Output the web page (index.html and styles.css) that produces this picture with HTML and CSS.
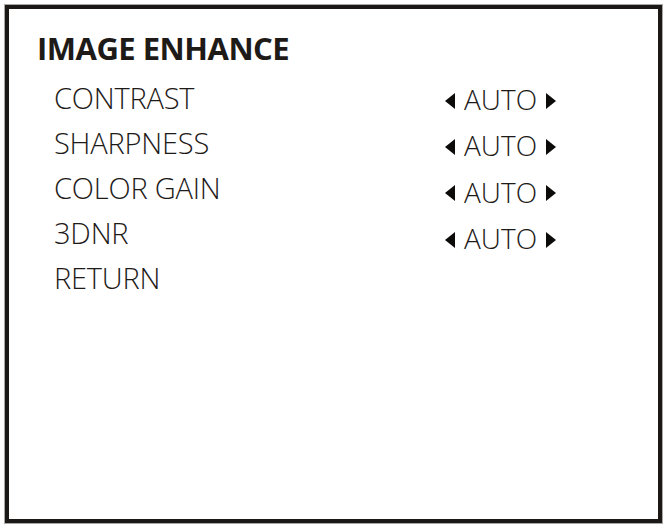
FILE: index.html
```html
<!DOCTYPE html>
<html lang="en">
<head>
    <meta charset="UTF-8">
    <title>Image Enhance</title>
    <link rel="stylesheet" href="styles.css">
</head>
<body>
    <div class="osd">
        <header>IMAGE ENHANCE</header>
        <div class="menu">
            <ul class="labels">
                <li>CONTRAST</li>
                <li>SHARPNESS</li>
                <li>COLOR GAIN</li>
                <li>3DNR</li>
                <li>RETURN</li>
            </ul>
            <ul class="values">
                <li><span class="arrow left"></span>AUTO<span class="arrow right"></span></li>
                <li><span class="arrow left"></span>AUTO<span class="arrow right"></span></li>
                <li><span class="arrow left"></span>AUTO<span class="arrow right"></span></li>
                <li><span class="arrow left"></span>AUTO<span class="arrow right"></span></li>
            </ul>
        </div>
    </div>
</body>
</html>
```

FILE: styles.css
```css
* {
    margin: 0;
    padding: 0;
    box-sizing: border-box;
}
body {
    background: white;
    font-family: 'Open Sans', sans-serif;
    color: #1e1a18;
    padding: 5px 6px 6px 5px;
}
.osd {
    height: 518px;
    border: 4px solid #1b1816;
    outline: 1px solid #a8a8a8;
    padding: 20px 0 0 28px;
}
header {
    font-size: 31px;
    font-weight: 700;
    line-height: 38px;
    letter-spacing: -0.5px;
}
.menu {
    display: flex;
    margin-top: 8px;
}
ul {
    list-style: none;
}
.labels {
    width: 408px;
    padding-left: 17px;
    font-size: 29px;
    font-weight: 300;
    line-height: 45px;
    letter-spacing: -0.2px;
}
.values {
    font-size: 28px;
    font-weight: 300;
    line-height: 46.3px;
    padding-top: 1px;
}
.values li {
    display: flex;
    align-items: center;
    gap: 9px;
}
.arrow {
    width: 0;
    height: 0;
    border-top: 8px solid transparent;
    border-bottom: 8px solid transparent;
    margin-top: 3px;
}
.arrow.left {
    border-right: 10px solid #0d0b0a;
}
.arrow.right {
    border-left: 10px solid #0d0b0a;
}
```
